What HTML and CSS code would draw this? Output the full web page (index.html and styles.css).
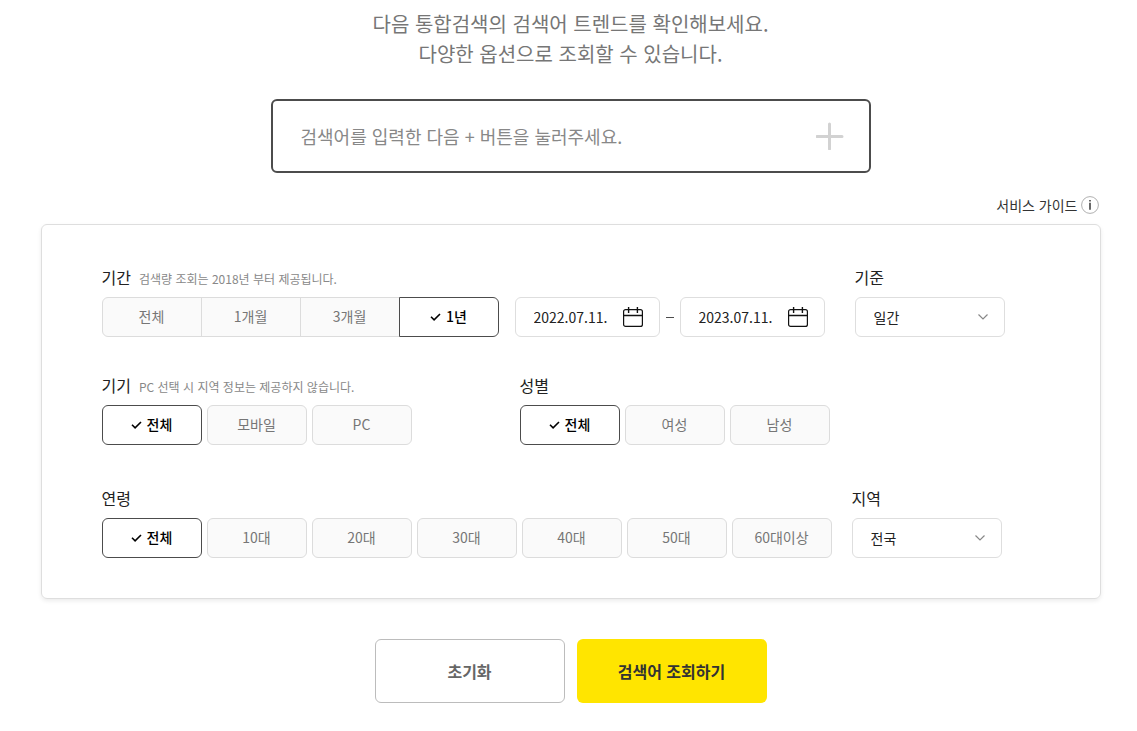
FILE: index.html
```html
<!DOCTYPE html>
<html lang="ko">
<head>
  <meta charset="utf-8">
  <meta name="viewport" content="width=device-width, initial-scale=1">
  <title>검색어 트렌드</title>
  <link rel="stylesheet" href="styles.css">
</head>

<body>
  <!-- shared icons -->
  <svg class="sprite" aria-hidden="true">
    <symbol id="icon-check" viewBox="0 0 11 8">
      <path d="M1 3.8 4.1 6.8 10 1" fill="none" stroke="currentColor" stroke-width="1.6"/>
    </symbol>
    <symbol id="icon-calendar" viewBox="0 0 20 20">
      <rect x="0.6" y="2.6" width="18.8" height="16.8" rx="2" fill="none" stroke="currentColor" stroke-width="1.2"/>
      <path d="M0.6 8.5H19.4M5.6 0V6M14.4 0V6" fill="none" stroke="currentColor" stroke-width="1.4"/>
    </symbol>
    <symbol id="icon-arrow" viewBox="0 0 12 8">
      <path d="M1.5 1.5 6 6 10.5 1.5" fill="none" stroke="currentColor" stroke-width="1.2"/>
    </symbol>
  </svg>

  <main class="trend">
    <p class="intro">다음 통합검색의 검색어 트렌드를 확인해보세요.<br>다양한 옵션으로 조회할 수 있습니다.</p>

    <div class="search-box">
      <input class="search-input" type="text" aria-label="검색어" placeholder="검색어를 입력한 다음 + 버튼을 눌러주세요.">
      <button class="btn-add" type="button" aria-label="추가">
        <svg width="28" height="28" viewBox="0 0 28 28"><path d="M13.5 2V27M1 14.5H26" stroke="#d2d2d2" stroke-width="3" stroke-linecap="round"/></svg>
      </button>
    </div>

    <a class="guide" href="#">서비스 가이드
      <svg width="18" height="18" viewBox="0 0 18 18">
        <circle cx="9" cy="9" r="8.4" fill="none" stroke="#b0b0b0"/>
        <path d="M9 6.8V13.8M9 4V5.6" stroke="#444" stroke-width="1.6"/>
      </svg>
    </a>

    <form id="trend-form" class="options">
      <div class="row">
        <div class="field">
          <div class="field-head"><span id="period" class="field-title">기간</span><span class="field-desc">검색량 조회는 2018년 부터 제공됩니다.</span></div>
          <div class="period">
            <div class="choices joined" role="radiogroup" aria-labelledby="period">
              <label class="choice"><input type="radio" name="period"><span>전체</span></label>
              <label class="choice"><input type="radio" name="period"><span>1개월</span></label>
              <label class="choice"><input type="radio" name="period"><span>3개월</span></label>
              <label class="choice"><input type="radio" name="period" checked><span><svg class="check"><use href="#icon-check"/></svg>1년</span></label>
            </div>
            <div class="dates">
              <div class="date">
                <input type="text" aria-label="시작일" value="2022.07.11.">
                <button type="button" aria-label="시작일 선택"><svg width="20" height="20"><use href="#icon-calendar"/></svg></button>
              </div>
              <span class="dash"></span>
              <div class="date">
                <input type="text" aria-label="종료일" value="2023.07.11.">
                <button type="button" aria-label="종료일 선택"><svg width="20" height="20"><use href="#icon-calendar"/></svg></button>
              </div>
            </div>
          </div>
        </div>
        <div class="field unit">
          <div class="field-head"><label class="field-title" for="unit">기준</label></div>
          <div class="select">
            <select id="unit">
              <option>일간</option>
            </select>
            <svg class="arrow"><use href="#icon-arrow"/></svg>
          </div>
        </div>
      </div>

      <div class="row">
        <div class="field">
          <div class="field-head"><span id="device" class="field-title">기기</span><span class="field-desc">PC 선택 시 지역 정보는 제공하지 않습니다.</span></div>
          <div class="choices" role="radiogroup" aria-labelledby="device">
            <label class="choice"><input type="radio" name="device" checked><span><svg class="check"><use href="#icon-check"/></svg>전체</span></label>
            <label class="choice"><input type="radio" name="device"><span>모바일</span></label>
            <label class="choice"><input type="radio" name="device"><span>PC</span></label>
          </div>
        </div>
        <div class="field gender">
          <div class="field-head"><span id="gender" class="field-title">성별</span></div>
          <div class="choices" role="radiogroup" aria-labelledby="gender">
            <label class="choice"><input type="radio" name="gender" checked><span><svg class="check"><use href="#icon-check"/></svg>전체</span></label>
            <label class="choice"><input type="radio" name="gender"><span>여성</span></label>
            <label class="choice"><input type="radio" name="gender"><span>남성</span></label>
          </div>
        </div>
      </div>

      <div class="row row-age">
        <div class="field">
          <div class="field-head"><span id="age" class="field-title">연령</span></div>
          <div class="choices" role="group" aria-labelledby="age">
            <label class="choice"><input type="checkbox" name="age" checked><span><svg class="check"><use href="#icon-check"/></svg>전체</span></label>
            <label class="choice"><input type="checkbox" name="age"><span>10대</span></label>
            <label class="choice"><input type="checkbox" name="age"><span>20대</span></label>
            <label class="choice"><input type="checkbox" name="age"><span>30대</span></label>
            <label class="choice"><input type="checkbox" name="age"><span>40대</span></label>
            <label class="choice"><input type="checkbox" name="age"><span>50대</span></label>
            <label class="choice"><input type="checkbox" name="age"><span>60대이상</span></label>
          </div>
        </div>
        <div class="field region">
          <div class="field-head"><label class="field-title" for="region">지역</label></div>
          <div class="select">
            <select id="region">
              <option>전국</option>
            </select>
            <svg class="arrow"><use href="#icon-arrow"/></svg>
          </div>
        </div>
      </div>
    </form>

    <div class="actions">
      <button class="btn btn-reset" type="reset" form="trend-form">초기화</button>
      <button class="btn btn-submit" type="button">검색어 조회하기</button>
    </div>
  </main>
</body>
</html>
```

FILE: styles.css
```css
* {
  box-sizing: border-box;
}

body {
  margin: 0;
  background-color: #fff;
  color: #222;
  font-family: "Noto Sans CJK KR", sans-serif;
  font-size: 14px;
  line-height: 20px;
}

input,
select,
button {
  font: inherit;
  color: inherit;
}

button {
  padding: 0;
  border: 0;
  background: none;
  cursor: pointer;
}

svg {
  display: block;
}

.sprite {
  position: absolute;
  width: 0;
  height: 0;
}

.trend {
  display: flex;
  flex-direction: column;
  max-width: 1100px;
  margin: 0 auto;
  padding: 9px 18px 28px 22px;
}

.intro {
  margin: 0;
  color: #767676;
  font-size: 20px;
  line-height: 30px;
  text-align: center;
}

/* search */
.search-box {
  display: flex;
  align-items: center;
  align-self: center;
  width: 100%;
  max-width: 600px;
  height: 74px;
  margin-top: 30px;
  padding: 0 25px 0 28px;
  border: 2px solid #4c4c4c;
  border-radius: 6px;
}

.search-input {
  flex: 1;
  min-width: 0;
  padding: 0;
  border: 0;
  outline: 0;
  font-size: 18px;
  line-height: 28px;
}

.search-input::placeholder {
  color: #888;
}

.guide {
  display: flex;
  align-items: center;
  align-self: flex-end;
  gap: 3px;
  margin: 22px 2px 9px 0;
  color: #333;
  text-decoration: none;
}

/* options */
.options {
  display: flex;
  flex-direction: column;
  gap: 37px;
  padding: 41px 60px 40px;
  border: 1px solid #dedede;
  border-radius: 6px;
  box-shadow: 0 2px 4px rgba(0, 0, 0, 0.08);
}

.row {
  display: flex;
  flex-wrap: wrap;
  row-gap: 24px;
}

.row-age {
  margin-top: 5px;
}

.field-head {
  display: flex;
  align-items: baseline;
  gap: 8px;
  height: 24px;
  margin-bottom: 7px;
  line-height: 22px;
}

.field-title {
  font-size: 16px;
}

.field-desc {
  color: #888;
  font-size: 12px;
}

.unit {
  margin-left: 30px;
}

.gender {
  margin-left: 108px;
}

.region {
  margin-left: 20px;
}

.choices {
  display: flex;
  flex-wrap: wrap;
  gap: 5px;
}

.choice {
  position: relative;
  width: 100px;
  cursor: pointer;
}

.choice input {
  position: absolute;
  opacity: 0;
}

.choice span {
  display: flex;
  align-items: center;
  justify-content: center;
  gap: 5px;
  height: 40px;
  padding-bottom: 2px;
  border: 1px solid #dcdcdc;
  border-radius: 6px;
  background-color: #fafafa;
  color: #767676;
}

.choice input:checked + span {
  border-color: #4c4c4c;
  background-color: #fff;
  color: #000;
  font-weight: 500;
}

.check {
  width: 11px;
  height: 8px;
  margin-top: 2px;
}

.joined {
  gap: 0;
}

.joined .choice + .choice {
  margin-left: -1px;
}

.joined .choice span {
  border-radius: 0;
}

.joined .choice:first-child span {
  border-radius: 6px 0 0 6px;
}

.joined .choice:last-child span {
  border-radius: 0 6px 6px 0;
}

.period {
  display: flex;
  flex-wrap: wrap;
  gap: 16px;
}

.dates {
  display: flex;
  align-items: center;
}

.date {
  display: flex;
  align-items: center;
  width: 145px;
  height: 40px;
  padding: 0 16px 0 18px;
  border: 1px solid #dedede;
  border-radius: 6px;
}

.date input {
  flex: 1;
  min-width: 0;
  padding: 0;
  border: 0;
  outline: 0;
}

.date button {
  color: #111;
}

.dash {
  width: 8px;
  height: 1px;
  margin: 0 6px;
  background-color: #4c4c4c;
}

.select {
  position: relative;
  width: 150px;
}

.select select {
  display: block;
  width: 100%;
  height: 40px;
  padding: 0 18px;
  border: 1px solid #dedede;
  border-radius: 6px;
  background-color: #fff;
  appearance: none;
}

.arrow {
  position: absolute;
  top: 16px;
  right: 16px;
  width: 12px;
  height: 8px;
  color: #888;
  pointer-events: none;
}

/* buttons */
.actions {
  display: flex;
  justify-content: center;
  gap: 12px;
  margin-top: 40px;
}

.btn {
  width: 190px;
  height: 64px;
  border-radius: 6px;
  font-size: 16px;
  font-weight: 700;
}

.btn-reset {
  border: 1px solid #bcbcbc;
  color: #666;
}

.btn-submit {
  background-color: #ffe500;
  color: #333;
}
```
